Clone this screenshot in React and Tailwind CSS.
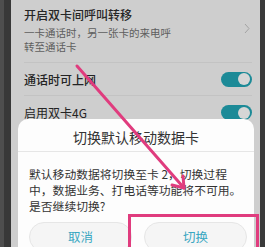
import React from "react";

function Toggle() {
  return (
    <div className="w-[31px] h-[15px] rounded-full bg-[#1c8a97] flex items-center justify-end pr-[2px]">
      <div className="w-[12px] h-[12px] rounded-full bg-[#d6d6d6]" />
    </div>
  );
}

export default function App() {
  const font = { fontFamily: '"Noto Sans CJK SC", "Noto Sans", sans-serif' };
  return (
    <div className="relative w-[265px] h-[247px] overflow-hidden flex" style={font}>
      <div className="w-[4px] bg-[#4e4e4e]" />
      <div className="w-[7px] bg-[#383838]" />
      <div className="relative flex-1 bg-[#cecece]">
        <div className="pl-[13px] pr-[8px]">
          <div className="flex items-center pt-[7px] pb-[9px] border-b border-[#c3c3c3]">
            <div className="flex-1">
              <div className="text-[12px] leading-[16px] font-medium text-[#262626]">开启双卡间呼叫转移</div>
              <div className="mt-[3px] text-[10.5px] leading-[13.5px] text-[#5e5e5e] whitespace-nowrap">
                一卡通话时，另一张卡的来电呼
                <br />
                转至通话卡
              </div>
            </div>
            <svg width="6" height="11" viewBox="0 0 6 11" className="mr-[2px] mt-[-4px]">
              <path d="M1 1 L5 5.5 L1 10" fill="none" stroke="#a3a3a3" strokeWidth="1" />
            </svg>
          </div>
          <div className="h-[33px] flex items-center justify-between border-b border-[#c3c3c3]">
            <span className="text-[12px] leading-[16px] font-medium text-[#232323] mt-[2px]">通话时可上网</span>
            <Toggle />
          </div>
          <div className="h-[33px] flex items-center justify-between">
            <span className="text-[12px] leading-[16px] text-[#232323]">启用双卡4G</span>
            <Toggle />
          </div>
        </div>

        <div className="absolute left-[7px] top-[119px] w-[236px] h-[140px] bg-[#fdfdfd] rounded-t-[10px]">
          <div className="h-[32px] pt-[11px] text-center text-[14px] leading-[14px] text-[#333]">
            切换默认移动数据卡
          </div>
          <div className="h-px bg-[#e6e6e6]" />
          <div className="pl-[11px] pt-[14px] text-[11.8px] leading-[16px] text-[#333] whitespace-nowrap">
            <div>默认移动数据将切换至卡 2，切换过程</div>
            <div>中，数据业务、打电话等功能将不可用。</div>
            <div>是否继续切换?</div>
          </div>
          <div className="flex gap-[12px] pl-[11px] pr-[7px] mt-[8px]">
            <div className="flex-1 h-[30px] rounded-full bg-[#f5f5f5] border border-[#e6e6e6] flex items-center justify-center text-[12.5px] leading-[14px] text-[#3aa7c2]">
              取消
            </div>
            <div className="flex-1 h-[30px] rounded-full bg-[#f5f5f5] border border-[#e6e6e6] flex items-center justify-center text-[12.5px] leading-[14px] text-[#3aa7c2]">
              切换
            </div>
          </div>
        </div>
      </div>
      <div className="w-[5px] bg-[#3a3a3a]" />

      <div className="absolute left-[128px] top-[214px] w-[131px] h-[50px] border-[3px] border-[#e03c7e]" />
      <svg className="absolute left-0 top-0" width="265" height="247" viewBox="0 0 265 247">
        <path d="M77 66 L184 188" stroke="#e03c7e" strokeWidth="3" strokeLinecap="round" fill="none" />
        <path d="M172 185 L184 188 L183 176" stroke="#e03c7e" strokeWidth="3" strokeLinecap="round" strokeLinejoin="round" fill="none" />
      </svg>
    </div>
  );
}
